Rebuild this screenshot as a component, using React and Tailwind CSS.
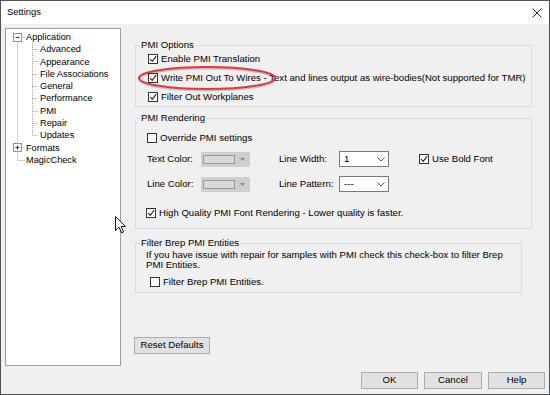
import React from 'react'

const Check = ({ checked }) => (
  <span className="w-[10px] h-[10px] shrink-0 border border-[#333] bg-white flex items-center justify-center">
    {checked && (
      <svg width="8" height="8" viewBox="0 0 8 8">
        <path d="M1 4 L3.2 6.4 L7.2 1.2" fill="none" stroke="#222" strokeWidth="1.1" />
      </svg>
    )}
  </span>
)

const CheckRow = ({ checked, label, className = '' }) => (
  <label className={`flex items-center gap-[3px] h-[16px] ${className}`}>
    <Check checked={checked} />
    <span>{label}</span>
  </label>
)

const Group = ({ title, className = '', children }) => (
  <fieldset className={`border border-[#dcdcdc] ${className}`}>
    <legend className="ml-[4px] px-px leading-[12px]">{title}</legend>
    {children}
  </fieldset>
)

const ColorPick = () => (
  <div className="w-[49px] h-[15px] bg-[#cfcfcf] flex items-center pl-[2px]">
    <span className="w-[32px] h-[9px] border border-[#9a9a9a] bg-[#d8d8d8]" />
    <svg className="ml-[5px]" width="5" height="3" viewBox="0 0 5 3">
      <path d="M0 0 H5 L2.5 3 Z" fill="#8a8a8a" />
    </svg>
  </div>
)

const Select = ({ value }) => (
  <div className="w-[50px] h-[16px] bg-white border border-[#7a7a7a] flex items-center justify-between pl-[4px] pr-[3px]">
    <span>{value}</span>
    <svg width="8" height="5" viewBox="0 0 8 5">
      <path d="M0.5 0.5 L4 4 L7.5 0.5" fill="none" stroke="#555" strokeWidth="1" />
    </svg>
  </div>
)

const Button = ({ label, className = '' }) => (
  <button className={`h-[17px] bg-[#e1e1e1] border border-[#adadad] flex items-center justify-center ${className}`}>
    {label}
  </button>
)

const treeRows = [
  { label: 'Application', indent: 'pl-[20px]' },
  { label: 'Advanced', indent: 'pl-[34px]' },
  { label: 'Appearance', indent: 'pl-[34px]' },
  { label: 'File Associations', indent: 'pl-[34px]' },
  { label: 'General', indent: 'pl-[34px]' },
  { label: 'Performance', indent: 'pl-[34px]' },
  { label: 'PMI', indent: 'pl-[34px]' },
  { label: 'Repair', indent: 'pl-[34px]' },
  { label: 'Updates', indent: 'pl-[34px]' },
  { label: 'Formats', indent: 'pl-[20px]' },
  { label: 'MagicCheck', indent: 'pl-[20px]' },
]

const childStubs = [20.5, 32.5, 45.5, 57.5, 69.5, 82.5, 94.5, 106.5]

const Tree = () => (
  <div className="relative w-[116px] h-[338px] shrink-0 bg-white border border-[#a0a0a0] text-[9.2px]">
    <svg className="absolute left-0 top-0" width="114" height="140">
      <g stroke="#a0a0a0" strokeDasharray="1 1" fill="none">
        <path d="M11.5 12.5 V114.5" />
        <path d="M11.5 122.5 V131.5 H19" />
        <path d="M15.5 8.5 H19" />
        <path d="M15.5 118.5 H19" />
        <path d="M26.5 14 V106.5" />
        {childStubs.map((y) => (
          <path key={y} d={`M26.5 ${y} H32`} />
        ))}
      </g>
      <rect x="7.5" y="4.5" width="8" height="8" fill="#fff" stroke="#919191" />
      <path d="M9.5 8.5 H13.5" stroke="#333" />
      <rect x="7.5" y="114.5" width="8" height="8" fill="#fff" stroke="#919191" />
      <path d="M9.5 118.5 H13.5 M11.5 116.5 V120.5" stroke="#333" />
    </svg>
    <div className="pt-[2px]">
      {treeRows.map((r) => (
        <div key={r.label} className={`h-[12.3px] leading-[12.3px] ${r.indent}`}>
          {r.label}
        </div>
      ))}
    </div>
  </div>
)

export default function App() {
  return (
    <div className="relative w-[550px] h-[395px] border border-[#4d5257] bg-[#f0f0f0] text-black text-[9.6px] font-['Liberation_Sans',Arial,sans-serif] overflow-hidden">
      <div className="h-[23px] bg-white flex items-center justify-between pl-[6px] pr-[7px]">
        <span className="text-[9.4px]">Settings</span>
        <svg width="10" height="10" viewBox="0 0 10 10">
          <path d="M0.5 0.5 L9.5 9.5 M9.5 0.5 L0.5 9.5" stroke="#222" strokeWidth="1" />
        </svg>
      </div>

      <div className="flex flex-col">
        <div className="flex pt-[4px] pl-[4px]">
          <Tree />

          <div className="flex flex-col ml-[14px] mt-[11px] w-[397px]">
            <Group title="PMI Options">
              <div className="flex flex-col gap-[3px] pl-[12px] pb-[1px]">
                <CheckRow checked label="Enable PMI Translation" />
                <CheckRow checked label="Write PMI Out To Wires - Text and lines output as wire-bodies(Not supported for TMR)" />
                <CheckRow checked label="Filter Out Workplanes" />
              </div>
            </Group>

            <Group title="PMI Rendering" className="mt-[5px]">
              <div className="flex flex-col pl-[11px] pb-[7px]">
                <CheckRow label="Override PMI settings" className="mt-[6px]" />
                <div className="flex items-center h-[16px] mt-[5px]">
                  <span className="w-[54px]">Text Color:</span>
                  <ColorPick />
                  <span className="w-[60px] ml-[29px]">Line Width:</span>
                  <Select value="1" />
                  <CheckRow checked label="Use Bold Font" className="ml-[30px]" />
                </div>
                <div className="flex items-center h-[16px] mt-[9px]">
                  <span className="w-[54px]">Line Color:</span>
                  <ColorPick />
                  <span className="w-[60px] ml-[29px]">Line Pattern:</span>
                  <Select value="---" />
                </div>
                <CheckRow checked label="High Quality PMI Font Rendering - Lower quality is faster." className="mt-[13px] -ml-px" />
              </div>
            </Group>

            <Group title="Filter Brep PMI Entities" className="mt-[8px] w-[387px]">
              <div className="flex flex-col pl-[10px] pb-[2px]">
                <p className="leading-[10px] mt-[1px]">
                  If you have issue with repair for samples with PMI check this check-box to filter Brep
                  <br />
                  PMI Entities.
                </p>
                <CheckRow label="Filter Brep PMI Entities." className="mt-[4px] ml-[4px]" />
              </div>
            </Group>

            <Button label="Reset Defaults" className="mt-[44px] -ml-px w-[76px]" />
          </div>
        </div>

        <div className="flex justify-end gap-[6px] mt-[6px] pr-[4px]">
          <Button label="OK" className="w-[57px] border-[#0078d7]" />
          <Button label="Cancel" className="w-[58px]" />
          <Button label="Help" className="w-[57px]" />
        </div>
      </div>

      <svg className="absolute left-[135px] top-[64px]" width="142" height="28" viewBox="0 0 142 28">
        <ellipse cx="71" cy="14.5" rx="68" ry="11" fill="none" stroke="rgba(0,0,0,0.18)" strokeWidth="2.2" />
        <ellipse cx="71" cy="13" rx="68" ry="11" fill="none" stroke="#e3373b" strokeWidth="2" />
      </svg>

      <svg className="absolute left-[114px] top-[215px]" width="12" height="18" viewBox="0 0 12 18">
        <path d="M0.5 0.5 V14.5 L4 11.2 L6.6 16.8 L8.6 15.9 L6.1 10.5 H10.5 Z" fill="#fff" stroke="#111" strokeWidth="1" />
      </svg>
    </div>
  )
}
